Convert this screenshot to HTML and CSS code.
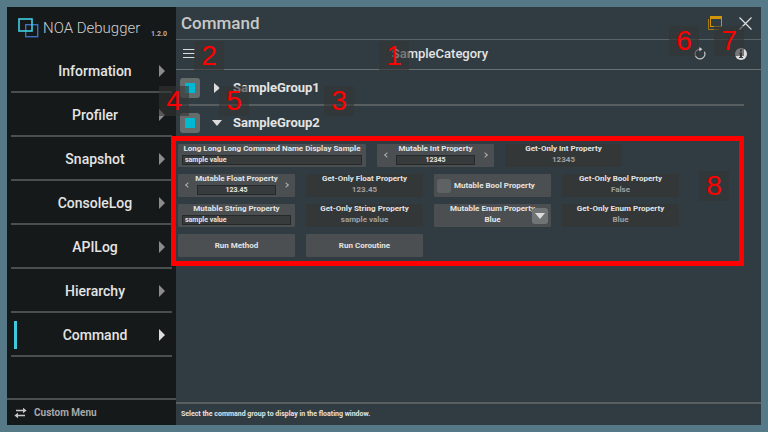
FILE: index.html
```html
<!DOCTYPE html>
<html lang="en">
<head>
  <meta charset="utf-8">
  <title>NOA Debugger</title>
  <meta name="viewport" content="width=device-width, initial-scale=1">
  <link rel="stylesheet" href="styles.css">
</head>
<body>
  <aside class="sidebar">
    <div class="brand">
      <svg class="logo" width="22" height="20" viewBox="0 0 22 20">
        <rect x="7.7" y="6.7" width="12" height="12" fill="none" stroke="#3f6fc0" stroke-width="1.4"/>
        <rect x="1" y="1" width="13" height="12" fill="none" stroke="#3fd0e4" stroke-width="1.6"/>
      </svg>
      <span class="name">NOA Debugger</span>
      <small class="version">1.2.0</small>
    </div>
    <nav class="menu">
      <a href="#information"><span>Information</span></a>
      <a href="#profiler"><span>Profiler</span></a>
      <a href="#snapshot"><span>Snapshot</span></a>
      <a href="#consolelog"><span>ConsoleLog</span></a>
      <a href="#apilog"><span>APILog</span></a>
      <a href="#hierarchy"><span>Hierarchy</span></a>
      <a href="#command" class="active"><span>Command</span></a>
    </nav>
    <button class="custom-menu">
      <svg width="13" height="12" viewBox="0 0 13 12" fill="none" stroke="#c8c8c8" stroke-width="1.4">
        <path d="M2 3.5H10M11 8.5H3"/>
        <path d="M9 0.8L12.6 3.5L9 6.2Z M4 5.8L0.4 8.5L4 11.2Z" fill="#c8c8c8" stroke="none"/>
      </svg>
      Custom Menu
    </button>
  </aside>

  <main class="panel">
    <header class="titlebar">
      <h1>Command</h1>
      <button aria-label="Floating window">
        <svg width="14" height="14" viewBox="0 0 14 14">
          <path d="M0.5 3V13.5H11" fill="none" stroke="#a87a10"/>
          <rect x="2.5" y="0.5" width="11" height="10" fill="none" stroke="#cf9407"/>
          <rect x="2" y="0" width="12" height="3" fill="#cf9407"/>
        </svg>
      </button>
      <button aria-label="Close">
        <svg width="13" height="13" viewBox="0 0 13 13" fill="none" stroke="#e0e0e0" stroke-width="1.2">
          <path d="M0.5 0.5L12.5 12.5M12.5 0.5L0.5 12.5"/>
        </svg>
      </button>
    </header>
    <div class="toolbar">
      <button aria-label="Categories">
        <svg width="12" height="9" viewBox="0 0 12 9" stroke="#dcdcdc" stroke-width="1">
          <path d="M0 0.5H12M0 4.5H12M0 8.5H12"/>
        </svg>
      </button>
      <h2>SampleCategory</h2>
      <div class="tools">
        <button aria-label="Refresh">
          <svg width="12" height="13" viewBox="0 0 12 13">
            <path d="M10.4 4.8A4.9 4.9 0 1 1 6 2.1" fill="none" stroke="#c8c8c8" stroke-width="1.2"/>
            <path d="M5.4 0L8.4 2.2L5.4 4.4Z" fill="#c8c8c8"/>
          </svg>
        </button>
        <button aria-label="Details">
          <svg width="12" height="12" viewBox="0 0 12 12">
            <circle cx="6" cy="6" r="6" fill="#dcdcdc"/>
            <path d="M5 1.6H7V3.4H5ZM4 4.6H7V9H8V10H4V9H5V5.6H4Z" fill="#303c42"/>
          </svg>
        </button>
      </div>
    </div>

    <div class="groups">
      <section class="group">
        <div class="group-head">
          <input type="checkbox" class="pin" id="group1" checked>
          <button class="fold" aria-label="Expand"></button>
          <label for="group1">SampleGroup1</label>
        </div>
      </section>
      <section class="group open">
        <div class="group-head">
          <input type="checkbox" class="pin" id="group2" checked>
          <button class="fold" aria-label="Collapse"></button>
          <label for="group2">SampleGroup2</label>
        </div>
        <div class="commands">
          <div class="command text wide">
            <label for="long">Long Long Long Command Name Display Sample</label>
            <input type="text" id="long" value="sample value">
          </div>
          <div class="command number">
            <label for="int">Mutable Int Property</label>
            <button class="prev" aria-label="Decrease"></button>
            <input type="text" id="int" value="12345">
            <button class="next" aria-label="Increase"></button>
          </div>
          <div class="command readonly">
            <label for="get-int">Get-Only Int Property</label>
            <output id="get-int">12345</output>
          </div>
          <div class="command number">
            <label for="float">Mutable Float Property</label>
            <button class="prev" aria-label="Decrease"></button>
            <input type="text" id="float" value="123.45">
            <button class="next" aria-label="Increase"></button>
          </div>
          <div class="command readonly">
            <label for="get-float">Get-Only Float Property</label>
            <output id="get-float">123.45</output>
          </div>
          <div class="command bool">
            <input type="checkbox" id="bool">
            <label for="bool">Mutable Bool Property</label>
          </div>
          <div class="command readonly">
            <label for="get-bool">Get-Only Bool Property</label>
            <output id="get-bool">False</output>
          </div>
          <div class="command text">
            <label for="string">Mutable String Property</label>
            <input type="text" id="string" value="sample value">
          </div>
          <div class="command readonly">
            <label for="get-string">Get-Only String Property</label>
            <output id="get-string">sample value</output>
          </div>
          <div class="command enum">
            <label for="enum">Mutable Enum Property</label>
            <select id="enum">
              <option>Blue</option>
            </select>
          </div>
          <div class="command readonly">
            <label for="get-enum">Get-Only Enum Property</label>
            <output id="get-enum">Blue</output>
          </div>
          <button class="command">Run Method</button>
          <button class="command">Run Coroutine</button>
        </div>
      </section>
    </div>
    <footer class="hint">Select the command group to display in the floating window.</footer>
  </main>

  <!-- numbered callouts over the window -->
  <div class="frame"></div>
  <span class="callout c1">1</span>
  <span class="callout c2">2</span>
  <span class="callout c3">3</span>
  <span class="callout c4">4</span>
  <span class="callout c5">5</span>
  <span class="callout c6">6</span>
  <span class="callout c7">7</span>
  <span class="callout c8">8</span>
</body>
</html>
```
FILE: styles.css
```css
*, *:before, *:after {
  box-sizing: border-box;
}
body {
  position: relative;
  display: flex;
  min-height: 100vh;
  margin: 0;
  padding: 7px;
  background: #557986;
  color: #e4e4e4;
  font-family: Roboto, "Liberation Sans", sans-serif;
  font-size: 14px;
  overflow: hidden;
}
h1, h2 {
  margin: 0;
  font-weight: 500;
}
button {
  margin: 0;
  padding: 0;
  border: none;
  background: transparent;
  color: inherit;
  font: inherit;
}
input, select {
  appearance: none;
  margin: 0;
  padding: 0;
  border: none;
  border-radius: 0;
  color: inherit;
  font: inherit;
}
svg {
  display: block;
}

/* sidebar */
.sidebar {
  display: flex;
  flex-direction: column;
  flex: none;
  width: 169px;
  background: #151919;
}
.brand {
  display: flex;
  align-items: center;
  height: 42px;
  padding: 0 9px 0 11px;
}
.brand .name {
  margin-left: 3px;
  color: #d0d0d0;
  font-size: 15px;
  font-weight: 300;
  white-space: nowrap;
}
.brand .version {
  margin-left: auto;
  padding-top: 12px;
  color: #b4b4b4;
  font-size: 7px;
  font-weight: 700;
}
.menu {
  flex: 1;
  padding: 0 4px;
}
.menu a {
  display: grid;
  grid-template-columns: 20px 1fr 13px;
  align-items: center;
  height: 44px;
  padding-top: 1px;
  border-bottom: 2px solid #4a4e4e;
  color: inherit;
  font-weight: 500;
  text-align: center;
  text-decoration: none;
}
.menu a:before {
  content: "";
  width: 3px;
  height: 28px;
  margin-left: 3px;
}
.menu a:after {
  content: "";
  border: 6px solid transparent;
  border-left-color: #8c8c8c;
  border-right: none;
  width: 0;
}
.menu a.active:before {
  background: #40c8dc;
}
.menu a.active:after {
  border-left-color: #dcdcdc;
}
.custom-menu {
  display: flex;
  align-items: center;
  gap: 7px;
  height: 27px;
  padding-left: 7px;
  border-top: 2px solid #4a4e4e;
  color: #a8a8a8;
  font-size: 10px;
  font-weight: 700;
}

/* main panel */
.panel {
  display: flex;
  flex-direction: column;
  flex: 1;
  min-width: 0;
  background: #303c42;
}
.titlebar {
  display: flex;
  align-items: center;
  gap: 17px;
  height: 33px;
  padding: 0 9px 0 5px;
  border-bottom: 1px solid #5a6265;
}
.titlebar h1 {
  flex: 1;
  color: #c8c8c8;
  font-size: 17px;
}
.toolbar {
  display: grid;
  grid-template-columns: 60px 1fr 110px;
  align-items: center;
  height: 30px;
  padding: 0 14px 2px 7px;
  border-bottom: 1px solid #6a7072;
}
.toolbar h2 {
  font-size: 13px;
  text-align: center;
}
.toolbar .tools {
  display: flex;
  align-items: center;
  justify-content: flex-end;
  gap: 29px;
}
.groups {
  flex: 1;
  padding: 1px 17px 0 0;
}
.group {
  border-bottom: 2px solid #595f61;
}
.group.open {
  border: none;
}
.group-head {
  display: flex;
  align-items: center;
  height: 33px;
  padding: 0 4px;
  font-size: 13px;
  font-weight: 700;
}
.pin {
  width: 20px;
  height: 20px;
  border: 5px solid #666b6c;
  border-radius: 3px;
  background: #666b6c;
}
.pin:checked {
  background: #00b8cf;
}
.fold {
  width: 14px;
  margin: 0 9px 0 10px;
}
.fold:before {
  content: "";
  display: block;
  width: 0;
  margin-left: 4px;
  border: 5px solid transparent;
  border-left: 6px solid #dcdcdc;
  border-right: none;
}
.open .fold:before {
  margin-left: 2px;
  border: 5px solid transparent;
  border-top: 6px solid #dcdcdc;
  border-bottom: none;
}

/* command tiles */
.commands {
  display: flex;
  flex-wrap: wrap;
  gap: 7px 11px;
  padding: 5px 4px 0 2px;
}
.command {
  position: relative;
  display: flex;
  flex-direction: column;
  justify-content: space-between;
  width: 117px;
  height: 23px;
  padding: 0 4px 2px;
  border-radius: 1px;
  background: #4b4f51;
  font-size: 8px;
  font-weight: 700;
  line-height: 10px;
  text-align: center;
}
button.command {
  display: block;
  padding: 0;
}
.command label {
  white-space: nowrap;
}
.command input[type="text"] {
  width: 100%;
  height: 10px;
  padding: 0 2px;
  border: 1px solid #262929;
  background: #383b3c;
  font-size: 7px;
  line-height: 8px;
}
.command.wide {
  width: 188px;
}
.command.number {
  display: grid;
  grid-template-columns: 19px 1fr 19px;
  padding: 0 0 2px;
}
.number label {
  grid-area: 1 / 1 / 2 / 4;
}
.number input {
  grid-area: 2 / 2;
  text-align: center;
}
.number button {
  display: flex;
  align-items: center;
  justify-content: center;
}
.number .prev {
  grid-area: 1 / 1 / 3 / 2;
}
.number .next {
  grid-area: 1 / 3 / 3 / 4;
}
.number button:before {
  content: "";
  width: 4px;
  height: 4px;
  border: solid #b0b0b0;
  border-width: 0 0 1px 1px;
  transform: rotate(45deg);
}
.number .next:before {
  transform: rotate(-135deg);
}
.command.readonly {
  background: #343738;
}
.readonly output {
  color: #a0a0a0;
}
.command.bool {
  flex-direction: row;
  align-items: center;
  padding: 0 13px 0 3px;
}
.bool input {
  width: 14px;
  height: 14px;
  border-radius: 3px;
  background: #5e6264;
}
.bool input:checked {
  background: #00b8cf;
}
.bool label {
  flex: 1;
}
.enum select {
  height: 10px;
  background: transparent;
  line-height: 10px;
  text-align-last: center;
}
.enum:before {
  content: "";
  position: absolute;
  right: 3px;
  bottom: 3px;
  width: 16px;
  height: 16px;
  border-radius: 3px;
  background: #707475;
  pointer-events: none;
}
.enum:after {
  content: "";
  position: absolute;
  right: 6px;
  bottom: 8px;
  border: 5px solid transparent;
  border-top: 6px solid #dcdcdc;
  border-bottom: none;
  pointer-events: none;
}
.hint {
  height: 23px;
  padding-left: 5px;
  border-top: 2px solid #595f61;
  font-size: 7px;
  font-weight: 700;
  line-height: 20px;
}

/* callouts */
.frame {
  position: absolute;
  left: 171px;
  top: 136px;
  width: 573px;
  height: 130px;
  border: 5px solid #f00;
  pointer-events: none;
}
.callout {
  position: absolute;
  width: 30px;
  height: 30px;
  background: rgba(52, 52, 52, .6);
  color: #f00;
  font: 28px/30px "Liberation Sans", Arial, sans-serif;
  text-align: center;
  pointer-events: none;
}
.c1 { left: 379px; top: 41px; }
.c2 { left: 194px; top: 41px; }
.c3 { left: 324px; top: 86px; }
.c4 { left: 159px; top: 86px; }
.c5 { left: 219px; top: 86px; }
.c6 { left: 669px; top: 26px; }
.c7 { left: 714px; top: 26px; }
.c8 { left: 699px; top: 171px; }
```
